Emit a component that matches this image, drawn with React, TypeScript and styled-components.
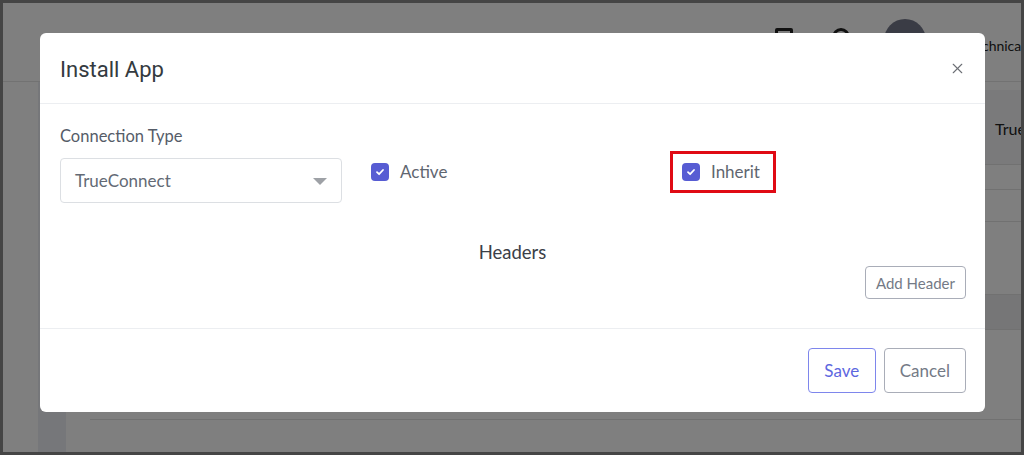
import React from 'react';
import styled, { createGlobalStyle } from 'styled-components';
import { X } from 'lucide-react';

const GlobalStyle = createGlobalStyle`
	html, body {
		margin: 0;
		padding: 0;
		background: #fff;
	}
	*, *::before, *::after {
		box-sizing: border-box;
	}
`;

const Frame = styled.div`
	position: relative;
	width: 1024px;
	height: 455px;
	border: 3px solid #454545;
	overflow: hidden;
	font-family: Lato, 'Open Sans', sans-serif;
`;

const Page = styled.div`
	display: flex;
	flex-direction: column;
	height: 100%;
	background: #fff;
`;

const TopBar = styled.div`
	display: flex;
	align-items: center;
	height: 79px;
	flex-shrink: 0;
	padding-left: 772px;
	border-bottom: 1px solid #e4e4e4;
`;

const TopIcon = styled.div<{ round?: boolean; space: number }>`
	flex-shrink: 0;
	width: 18px;
	height: 18px;
	margin: 0 ${(p) => p.space}px 10px 0;
	border: 3px solid #222;
	border-radius: ${(p) => (p.round ? '50%' : '2px')};
`;

const Avatar = styled.div`
	flex-shrink: 0;
	width: 42px;
	height: 42px;
	margin-top: -4px;
	border-radius: 50%;
	background: #74788a;
`;

const UserName = styled.span`
	margin: 6px 0 0 42px;
	white-space: nowrap;
	font-size: 14px;
	color: #222;
`;

const Body = styled.div`
	flex: 1;
	display: flex;
`;

const SideBar = styled.div`
	width: 35px;
	background: #fff;
`;

const SubBar = styled.div`
	width: 28px;
	background: #eceef4;
`;

const Content = styled.div`
	flex: 1;
	padding: 8px 0 0 24px;
`;

const TableRow = styled.div<{ h: number; shade?: string }>`
	height: ${(p) => p.h}px;
	display: flex;
	align-items: center;
	justify-content: flex-end;
	background: ${(p) => p.shade || '#fff'};
	border-bottom: 1px solid #e2e2e2;
	font-size: 16px;
	color: #222;
	white-space: nowrap;
	overflow: hidden;
`;

const HeadCell = styled.span`
	width: 26px;
	margin-top: 2px;
`;

const Overlay = styled.div`
	position: absolute;
	inset: 0;
	background: rgba(0, 0, 0, 0.5);
	padding: 30px 0 0 37px;
`;

const Modal = styled.div`
	width: 945px;
	height: 379px;
	background: #fff;
	border-radius: 6px;
	display: flex;
	flex-direction: column;
	font-family: Lato, 'Open Sans', sans-serif;
`;

const ModalHeader = styled.div`
	height: 71px;
	flex-shrink: 0;
	display: flex;
	align-items: center;
	justify-content: space-between;
	padding: 0 20px;
	border-bottom: 1px solid #eceef1;
`;

const Title = styled.h2`
	margin: 0;
	padding-top: 2px;
	font-family: Roboto, 'Liberation Sans', sans-serif;
	font-weight: 400;
	font-size: 22px;
	color: #343a40;
`;

const CloseButton = styled.button`
	border: 0;
	background: none;
	padding: 0;
	display: flex;
	color: #6c6f75;
	margin-right: -1px;
`;

const ModalBody = styled.div`
	flex: 1;
	padding: 21px 20px 0;
	display: flex;
	flex-direction: column;
`;

const FieldRow = styled.div`
	display: grid;
	grid-template-columns: repeat(3, 282px);
	column-gap: 29px;
`;

const Label = styled.div`
	font-size: 16.5px;
	color: #555c68;
	line-height: 22px;
	margin-bottom: 11px;
`;

const Select = styled.div`
	height: 45px;
	border: 1px solid #dcdfe3;
	border-radius: 4px;
	display: flex;
	align-items: center;
	justify-content: space-between;
	padding: 0 14px 0 14px;
	font-size: 17px;
	color: #636a75;
`;

const Caret = styled.span`
	width: 0;
	height: 0;
	border-left: 7px solid transparent;
	border-right: 7px solid transparent;
	border-top: 7px solid #9ea1a6;
	margin-top: 1px;
`;

const CheckCell = styled.div`
	padding-top: 36px;
`;

const CheckLabel = styled.label<{ marked?: boolean }>`
	position: relative;
	display: inline-flex;
	align-items: center;
	gap: 11px;
	height: 18px;
	font-size: 17px;
	color: #5f6670;
	line-height: 18px;

	&::after {
		content: '';
		display: ${(p) => (p.marked ? 'block' : 'none')};
		position: absolute;
		left: -12px;
		top: -12px;
		width: 106px;
		height: 42px;
		border: 3px solid #e00a14;
	}
`;

const Box = styled.span`
	width: 18px;
	height: 18px;
	border-radius: 4px;
	background: #575cd3;
	display: flex;
	align-items: center;
	justify-content: center;
`;

const HeadersTitle = styled.div`
	margin-top: 38px;
	text-align: center;
	font-size: 18.5px;
	line-height: 22px;
	color: #3b4048;
`;

const HeaderActions = styled.div`
	display: flex;
	justify-content: flex-end;
	margin-top: 3px;
`;

const OutlineButton = styled.button<{ tone?: 'primary' | 'muted'; size?: 'sm' | 'md' }>`
	font-family: Lato, 'Open Sans', sans-serif;
	background: #fff;
	border-radius: 4px;
	border: 1px solid ${(p) => (p.tone === 'primary' ? '#7e86ec' : '#a9adb8')};
	color: ${(p) => (p.tone === 'primary' ? '#5d67df' : '#747a86')};
	font-size: ${(p) => (p.size === 'sm' ? '15px' : '17px')};
	height: ${(p) => (p.size === 'sm' ? '33px' : '45px')};
	min-width: ${(p) => (p.size === 'sm' ? '0' : '68px')};
	padding: ${(p) => (p.size === 'sm' ? '0 10px' : '0 15px')};
	margin-right: -1px;
`;

const ModalFooter = styled.div`
	height: 84px;
	flex-shrink: 0;
	border-top: 1px solid #eceef1;
	display: flex;
	justify-content: flex-end;
	align-items: flex-start;
	gap: 9px;
	padding: 19px 20px 0;
`;

const Check = () => (
	<svg width="10" height="10" viewBox="0 0 10 10">
		<path d="M2 5.2 L4.1 7.2 L8 3" stroke="#fff" strokeWidth="1.8" fill="none" strokeLinecap="round" strokeLinejoin="round" />
	</svg>
);

export default function App() {
	return (
		<Frame>
			<GlobalStyle />
			<Page>
				<TopBar>
					<TopIcon space={39} />
					<TopIcon round space={34} />
					<Avatar />
					<UserName>Technical Support</UserName>
				</TopBar>
				<Body>
					<SideBar />
					<SubBar />
					<Content>
						<TableRow h={75} shade="#f4f5f7">
							<HeadCell>TrueConnect</HeadCell>
						</TableRow>
						<TableRow h={25} />
						<TableRow h={32} />
						<TableRow h={73} />
						<TableRow h={35} shade="#ececee" />
						<TableRow h={90} />
					</Content>
				</Body>
			</Page>
			<Overlay>
				<Modal>
					<ModalHeader>
						<Title>Install App</Title>
						<CloseButton>
							<X size={17} strokeWidth={1.6} />
						</CloseButton>
					</ModalHeader>
					<ModalBody>
						<FieldRow>
							<div>
								<Label>Connection Type</Label>
								<Select>
									TrueConnect
									<Caret />
								</Select>
							</div>
							<CheckCell>
								<CheckLabel>
									<Box>
										<Check />
									</Box>
									Active
								</CheckLabel>
							</CheckCell>
							<CheckCell>
								<CheckLabel marked>
									<Box>
										<Check />
									</Box>
									Inherit
								</CheckLabel>
							</CheckCell>
						</FieldRow>
						<HeadersTitle>Headers</HeadersTitle>
						<HeaderActions>
							<OutlineButton size="sm">Add Header</OutlineButton>
						</HeaderActions>
					</ModalBody>
					<ModalFooter>
						<OutlineButton tone="primary">Save</OutlineButton>
						<OutlineButton>Cancel</OutlineButton>
					</ModalFooter>
				</Modal>
			</Overlay>
		</Frame>
	);
}
